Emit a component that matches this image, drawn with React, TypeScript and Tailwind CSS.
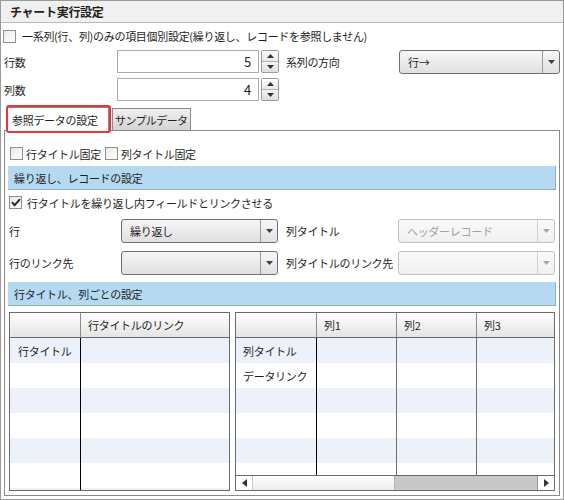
import React from "react";

function Check({ checked }: { checked?: boolean }) {
  return (
    <span className="w-[13px] h-[13px] shrink-0 border border-[#8e8f8f] bg-linear-to-br from-[#e9e9e9] to-white flex items-center justify-center">
      {checked && (
        <svg width="10" height="9" viewBox="0 0 10 9">
          <path d="M1 4.2 L3.6 7.2 L9 1.2" stroke="#2a2a2a" strokeWidth="1.9" fill="none" />
        </svg>
      )}
    </span>
  );
}

function Arrow({ color = "#444" }: { color?: string }) {
  return (
    <svg width="7" height="4" viewBox="0 0 7 4">
      <path d="M0 0 L7 0 L3.5 4 Z" fill={color} />
    </svg>
  );
}

function Combo({
  value,
  disabled,
  width,
}: {
  value?: string;
  disabled?: boolean;
  width: string;
}) {
  return (
    <div
      className={`${width} h-[24px] flex rounded-[3px] border ${
        disabled
          ? "border-[#c2c2c2] bg-linear-to-b from-[#fafafa] to-[#f0f0f0] text-[#a0a0a0]"
          : "border-[#707070] bg-linear-to-b from-[#f7f7f7] to-[#dfdfdf] text-[#1e1e1e]"
      }`}
    >
      <div className="flex-1 flex items-center pl-[8px]">{value}</div>
      <div
        className={`w-[17px] flex items-center justify-center border-l ${
          disabled ? "border-[#d0d0d0]" : "border-[#9a9a9a]"
        }`}
      >
        <Arrow color={disabled ? "#a8a8a8" : "#404040"} />
      </div>
    </div>
  );
}

function NumberBox({ value }: { value: string }) {
  return (
    <div className="flex h-[23px]">
      <div className="w-[142px] border border-[#abadb3] bg-white flex items-center justify-end pr-[7px] text-[13px]">
        {value}
      </div>
      <div className="ml-[2px] w-[18px] flex flex-col border border-[#9a9a9a] rounded-[2px] overflow-hidden">
        <div className="flex-1 flex items-center justify-center bg-linear-to-b from-white to-[#e8e8e8] border-b border-[#b0b0b0]">
          <svg width="7" height="4" viewBox="0 0 7 4">
            <path d="M0 4 L7 4 L3.5 0 Z" fill="#333" />
          </svg>
        </div>
        <div className="flex-1 flex items-center justify-center bg-linear-to-b from-[#f4f4f4] to-[#dedede]">
          <Arrow color="#333" />
        </div>
      </div>
    </div>
  );
}

function SectionBar({ label }: { label: string }) {
  return (
    <div className="h-[24px] bg-[#b5d9f0] border-r border-b border-[#8fb0c6] flex items-center pl-[6px]">
      {label}
    </div>
  );
}

const leftRows = ["行タイトル", "", "", "", "", "", ""];
const rightRows = ["列タイトル", "データリンク", "", "", "", "", ""];

export default function App() {
  return (
    <div className="w-[564px] h-[500px] bg-white border border-[#9a9a9a] flex flex-col whitespace-nowrap text-[11px] leading-[14px] tracking-[-0.3px] text-[#1e1e1e] font-['Meiryo_UI','Noto_Sans_CJK_JP','Noto_Sans',sans-serif]">
      <div className="h-[22px] shrink-0 bg-[#f0f0f0] border-b border-[#b9b9b9] flex items-center pl-[9px] font-bold text-[12px]">
        チャート実行設定
      </div>

      <div className="pl-[2px]">
        <div className="mt-[6px] flex items-center gap-[6px]">
          <Check />
          <span>一系列(行、列)のみの項目個別設定(繰り返し、レコードを参照しません)</span>
        </div>

        <div className="mt-[7px] flex items-start">
          <div className="w-[114px] h-[23px] flex items-center pl-[1px]">行数</div>
          <NumberBox value="5" />
          <div className="ml-[7px] w-[113px] h-[23px] flex items-center">系列の方向</div>
          <Combo value="行→" width="w-[161px]" />
        </div>

        <div className="mt-[4px] flex items-start">
          <div className="w-[114px] h-[23px] flex items-center pl-[1px]">列数</div>
          <NumberBox value="4" />
        </div>
      </div>

      <div className="px-[3px] mt-[6px] flex-1 flex flex-col pb-[3px]">
        <div className="flex items-end pl-[3px]">
          <div className="relative z-10 -mb-px h-[24px] w-[102px] bg-white border border-b-0 border-[#8a8a8a] flex items-center pl-[4px]">
            参照データの設定
            <div className="absolute -left-[2px] -right-[3px] -top-[3px] -bottom-[2px] border-2 border-[#e8343a] rounded-[3px]" />
          </div>
          <div className="ml-[3px] h-[22px] w-[79px] bg-linear-to-b from-[#f0f0f0] to-[#d3d3d3] border border-b-0 border-[#8a8a8a] flex items-center pl-[2px] tracking-[-0.6px]">
            サンプルデータ
          </div>
        </div>

        <div className="flex-1 border border-[#8a8a8a] px-[3px] flex flex-col">
          <div className="mt-[16px] pl-[2px] flex items-center h-[13px]">
            <Check />
            <span className="ml-[3px]">行タイトル固定</span>
            <span className="ml-[4px]">
              <Check />
            </span>
            <span className="ml-[3px]">列タイトル固定</span>
          </div>

          <div className="mt-[6px]">
            <SectionBar label="繰り返し、レコードの設定" />
          </div>

          <div className="mt-[6px] pl-[1px] flex items-center gap-[5px] h-[13px]">
            <Check checked />
            <span>行タイトルを繰り返し内フィールドとリンクさせる</span>
          </div>

          <div className="mt-[10px] flex items-center">
            <div className="w-[113px] pl-[1px]">行</div>
            <Combo value="繰り返し" width="w-[157px]" />
            <div className="ml-[8px] w-[112px]">列タイトル</div>
            <Combo value="ヘッダーレコード" disabled width="w-[157px]" />
          </div>

          <div className="mt-[8px] flex items-center">
            <div className="w-[113px] pl-[1px]">行のリンク先</div>
            <Combo width="w-[157px]" />
            <div className="ml-[8px] w-[112px]">列タイトルのリンク先</div>
            <Combo disabled width="w-[157px]" />
          </div>

          <div className="mt-[7px]">
            <SectionBar label="行タイトル、列ごとの設定" />
          </div>

          <div className="mt-[6px] pl-[1px] flex gap-[5px] h-[179px]">
            <div className="w-[221px] border border-[#6a6a6a] flex flex-col overflow-hidden">
              <div className="h-[25px] shrink-0 flex border-b border-[#6a6a6a] bg-linear-to-b from-white to-[#e4e4e4]">
                <div className="w-[71px] border-r border-[#8a8a8a]" />
                <div className="flex-1 flex items-center pl-[7px]">行タイトルのリンク</div>
              </div>
              <div className="flex-1 overflow-hidden">
                {leftRows.map((r, i) => (
                  <div
                    key={i}
                    className={`h-[25px] flex ${i % 2 === 0 ? "bg-[#edf2fa]" : "bg-white"}`}
                  >
                    <div className="w-[71px] border-r border-black flex items-center pl-[8px]">{r}</div>
                    <div className="flex-1" />
                  </div>
                ))}
              </div>
            </div>

            <div className="w-[320px] border border-[#6a6a6a] flex flex-col overflow-hidden">
              <div className="h-[25px] shrink-0 flex border-b border-[#6a6a6a] bg-linear-to-b from-white to-[#e4e4e4]">
                <div className="w-[81px] border-r border-[#8a8a8a]" />
                <div className="w-[80px] border-r border-[#8a8a8a] flex items-center pl-[7px]">列1</div>
                <div className="w-[80px] border-r border-[#8a8a8a] flex items-center pl-[7px]">列2</div>
                <div className="flex-1 flex items-center pl-[7px]">列3</div>
              </div>
              <div className="flex-1 overflow-hidden">
                {rightRows.map((r, i) => (
                  <div
                    key={i}
                    className={`h-[25px] flex ${i % 2 === 0 ? "bg-[#edf2fa]" : "bg-white"}`}
                  >
                    <div className="w-[81px] border-r border-black flex items-center pl-[7px]">{r}</div>
                    <div className="w-[80px] border-r border-[#6f6f6f]" />
                    <div className="w-[80px] border-r border-[#6f6f6f]" />
                    <div className="flex-1" />
                  </div>
                ))}
              </div>
              <div className="h-[15px] shrink-0 flex border-t border-[#6a6a6a] bg-[#c8c8c8]">
                <div className="w-[17px] bg-white border-r border-[#c8c8c8] flex items-center justify-center">
                  <svg width="5" height="8" viewBox="0 0 5 8">
                    <path d="M5 0 L5 8 L0 4 Z" fill="#333" />
                  </svg>
                </div>
                <div className="w-[142px] bg-linear-to-b from-white to-[#ececec] border-r border-[#b4b4b4]" />
                <div className="flex-1" />
                <div className="w-[17px] bg-white border-l border-[#9a9a9a] flex items-center justify-center">
                  <svg width="5" height="8" viewBox="0 0 5 8">
                    <path d="M0 0 L0 8 L5 4 Z" fill="#333" />
                  </svg>
                </div>
              </div>
            </div>
          </div>
        </div>
      </div>
    </div>
  );
}
